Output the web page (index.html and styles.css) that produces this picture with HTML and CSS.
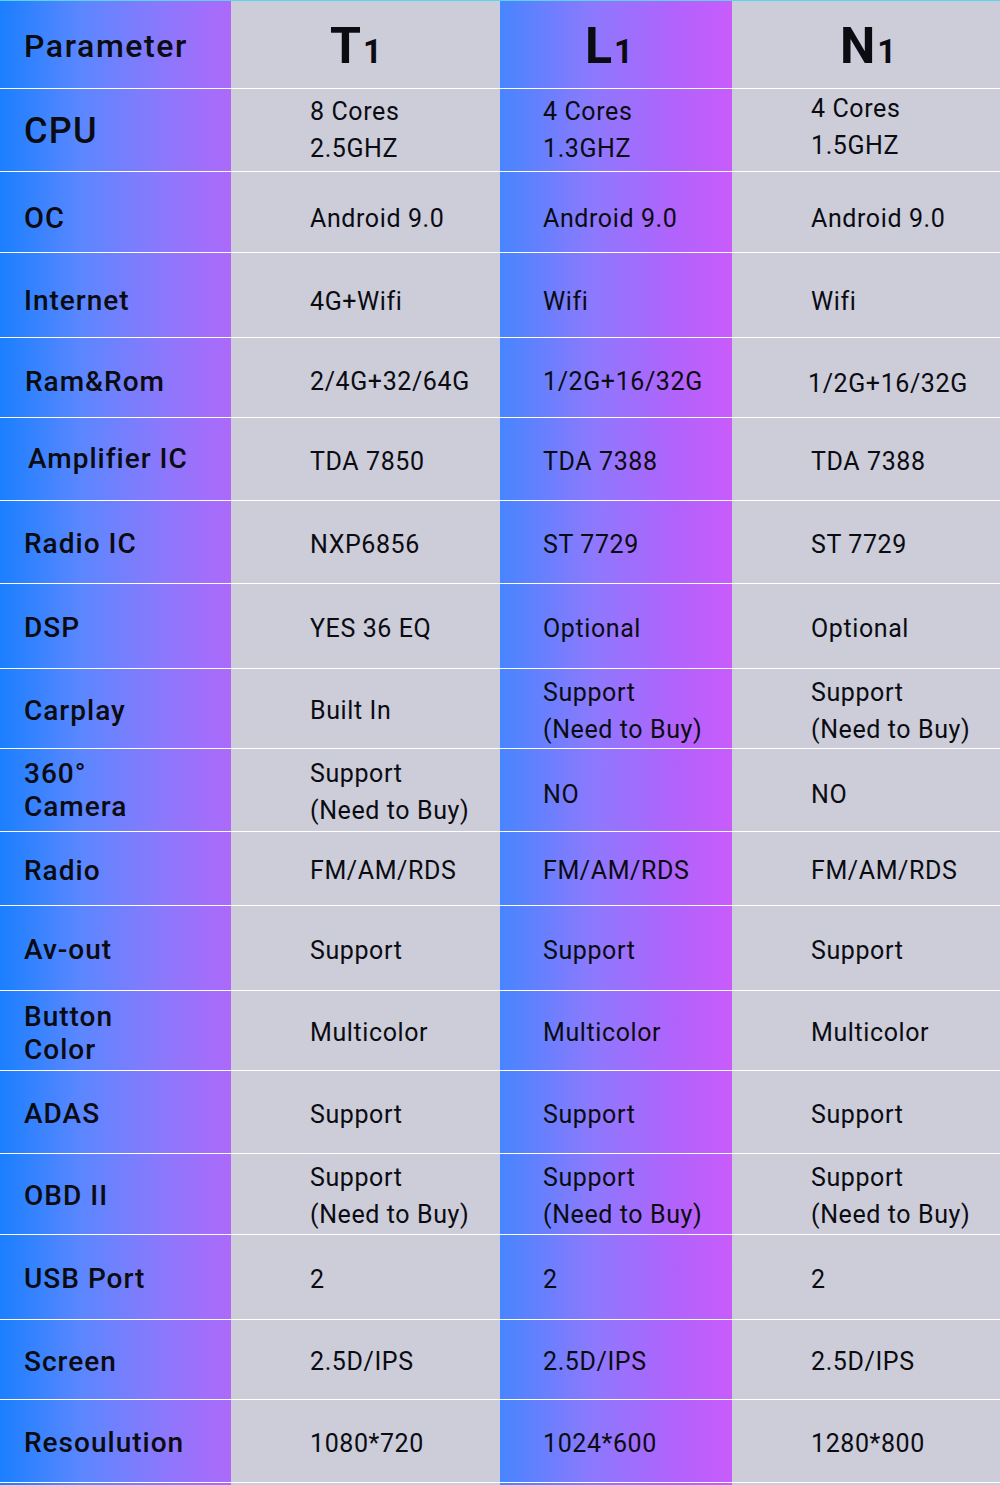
FILE: index.html
```html
<!DOCTYPE html>
<html lang="en">
<head>
<meta charset="utf-8">
<title>Parameter comparison</title>
<link rel="stylesheet" href="styles.css">
</head>
<body>
<div class="table">
  <div class="cell c1 head"><span class="param">Parameter</span></div>
  <div class="cell c2 head pad-t1"><span class="model">T<small>1</small></span></div>
  <div class="cell c3 head pad-l1"><span class="model">L<small>1</small></span></div>
  <div class="cell c4 head pad-n1"><span class="model">N<small>1</small></span></div>

  <div class="cell c1"><span class="label big">CPU</span></div>
  <div class="cell c2 up"><span class="val">8 Cores</span><span class="val">2.5GHZ</span></div>
  <div class="cell c3 up"><span class="val">4 Cores</span><span class="val">1.3GHZ</span></div>
  <div class="cell c4 up2"><span class="val">4 Cores</span><span class="val">1.5GHZ</span></div>

  <div class="cell c1 low"><span class="label oc">OC</span></div>
  <div class="cell c2 low"><span class="val">Android 9.0</span></div>
  <div class="cell c3 low"><span class="val">Android 9.0</span></div>
  <div class="cell c4 low"><span class="val">Android 9.0</span></div>

  <div class="cell c1 low"><span class="label">Internet</span></div>
  <div class="cell c2 low"><span class="val">4G+Wifi</span></div>
  <div class="cell c3 low"><span class="val">Wifi</span></div>
  <div class="cell c4 low"><span class="val">Wifi</span></div>

  <div class="cell c1 mid"><span class="label ind1">Ram&amp;Rom</span></div>
  <div class="cell c2 mid"><span class="val">2/4G+32/64G</span></div>
  <div class="cell c3 mid"><span class="val">1/2G+16/32G</span></div>
  <div class="cell c4 low"><span class="val out3">1/2G+16/32G</span></div>

  <div class="cell c1 up"><span class="label ind4">Amplifier IC</span></div>
  <div class="cell c2"><span class="val">TDA 7850</span></div>
  <div class="cell c3"><span class="val">TDA 7388</span></div>
  <div class="cell c4"><span class="val">TDA 7388</span></div>

  <div class="cell c1"><span class="label">Radio IC</span></div>
  <div class="cell c2"><span class="val">NXP6856</span></div>
  <div class="cell c3"><span class="val">ST 7729</span></div>
  <div class="cell c4"><span class="val">ST 7729</span></div>

  <div class="cell c1"><span class="label">DSP</span></div>
  <div class="cell c2"><span class="val">YES 36 EQ</span></div>
  <div class="cell c3"><span class="val">Optional</span></div>
  <div class="cell c4"><span class="val">Optional</span></div>

  <div class="cell c1"><span class="label">Carplay</span></div>
  <div class="cell c2"><span class="val">Built In</span></div>
  <div class="cell c3"><span class="val">Support</span><span class="val">(Need to Buy)</span></div>
  <div class="cell c4"><span class="val">Support</span><span class="val">(Need to Buy)</span></div>

  <div class="cell c1 up"><span class="label two">360°</span><span class="label two">Camera</span></div>
  <div class="cell c2"><span class="val">Support</span><span class="val">(Need to Buy)</span></div>
  <div class="cell c3 mid"><span class="val">NO</span></div>
  <div class="cell c4 mid"><span class="val">NO</span></div>

  <div class="cell c1"><span class="label">Radio</span></div>
  <div class="cell c2"><span class="val">FM/AM/RDS</span></div>
  <div class="cell c3"><span class="val">FM/AM/RDS</span></div>
  <div class="cell c4"><span class="val">FM/AM/RDS</span></div>

  <div class="cell c1"><span class="label">Av-out</span></div>
  <div class="cell c2"><span class="val">Support</span></div>
  <div class="cell c3"><span class="val">Support</span></div>
  <div class="cell c4"><span class="val">Support</span></div>

  <div class="cell c1"><span class="label two">Button</span><span class="label two">Color</span></div>
  <div class="cell c2"><span class="val">Multicolor</span></div>
  <div class="cell c3"><span class="val">Multicolor</span></div>
  <div class="cell c4"><span class="val">Multicolor</span></div>

  <div class="cell c1"><span class="label">ADAS</span></div>
  <div class="cell c2"><span class="val">Support</span></div>
  <div class="cell c3"><span class="val">Support</span></div>
  <div class="cell c4"><span class="val">Support</span></div>

  <div class="cell c1"><span class="label">OBD II</span></div>
  <div class="cell c2"><span class="val">Support</span><span class="val">(Need to Buy)</span></div>
  <div class="cell c3"><span class="val">Support</span><span class="val">(Need to Buy)</span></div>
  <div class="cell c4"><span class="val">Support</span><span class="val">(Need to Buy)</span></div>

  <div class="cell c1"><span class="label">USB Port</span></div>
  <div class="cell c2"><span class="val">2</span></div>
  <div class="cell c3"><span class="val">2</span></div>
  <div class="cell c4"><span class="val">2</span></div>

  <div class="cell c1"><span class="label">Screen</span></div>
  <div class="cell c2"><span class="val">2.5D/IPS</span></div>
  <div class="cell c3"><span class="val">2.5D/IPS</span></div>
  <div class="cell c4"><span class="val">2.5D/IPS</span></div>

  <div class="cell c1"><span class="label">Resoulution</span></div>
  <div class="cell c2"><span class="val">1080*720</span></div>
  <div class="cell c3"><span class="val">1024*600</span></div>
  <div class="cell c4"><span class="val">1280*800</span></div>

  <div class="cell c1 end"></div>
  <div class="cell c2 end"></div>
  <div class="cell c3 end"></div>
  <div class="cell c4 end"></div>
</div>
</body>
</html>
```

FILE: styles.css
```css
html, body {
  margin: 0;
  padding: 0;
  background: #cccdd9;
}

.table {
  width: 1000px;
  height: 1485px;
  display: grid;
  grid-template-columns: 231px 269px 232px 268px;
  grid-template-rows: 88px 83px 81px 85px 80px 83px 83px 85px 80px 83px 74px 85px 80px 83px 81px 85px 80px 83px 3px;
  font-family: Roboto, "Liberation Sans", sans-serif;
  color: #0b0b12;
}

.cell {
  box-sizing: border-box;
  border-top: 1px solid #ffffff;
  display: flex;
  flex-direction: column;
  justify-content: center;
  align-items: flex-start;
  padding-top: 4px;
  overflow: hidden;
}

.cell.head {
  border-top: 1px solid #58d6ee;
  padding-top: 2px;
}

.cell.low { padding-top: 12px; }
.cell.mid { padding-top: 8px; }
.cell.up { padding-top: 0; }
.cell.up2 { padding-top: 0; padding-bottom: 6px; }
.cell.end { padding: 0; }

.c1 {
  background: linear-gradient(90deg, #1b7fff 0%, #5b87ff 35%, #8b78fc 70%, #ad69fa 100%);
  padding-left: 24px;
}
.c2 {
  background: #cccdd9;
  padding-left: 79px;
}
.c3 {
  background: linear-gradient(90deg, #4785ff 0%, #8d79fd 40%, #b163fb 75%, #c95cfb 100%);
  padding-left: 43px;
}
.c4 {
  background: #cccdd9;
  padding-left: 79px;
}

.pad-t1 { padding-left: 99px; }
.pad-l1 { padding-left: 85px; }
.pad-n1 { padding-left: 108px; }

.param {
  font-size: 32px;
  font-weight: 500;
  letter-spacing: 1.6px;
}

.model {
  font-size: 50px;
  font-weight: 700;
  line-height: 1;
}
.model small {
  font-size: 33px;
  font-weight: 700;
  margin-left: 2px;
}

.label {
  font-size: 28px;
  font-weight: 500;
  letter-spacing: 1px;
  line-height: 1.2;
}
.label.big {
  font-size: 36px;
  letter-spacing: 1.2px;
}
.label.oc { font-size: 29px; }
.label.two { line-height: 33px; }
.label.ind1 { margin-left: 1px; }
.label.ind4 { margin-left: 4px; }

.val {
  font-size: 25px;
  font-weight: 400;
  letter-spacing: 0.6px;
  line-height: 37px;
}
.val.out3 { margin-left: -3px; }
```
